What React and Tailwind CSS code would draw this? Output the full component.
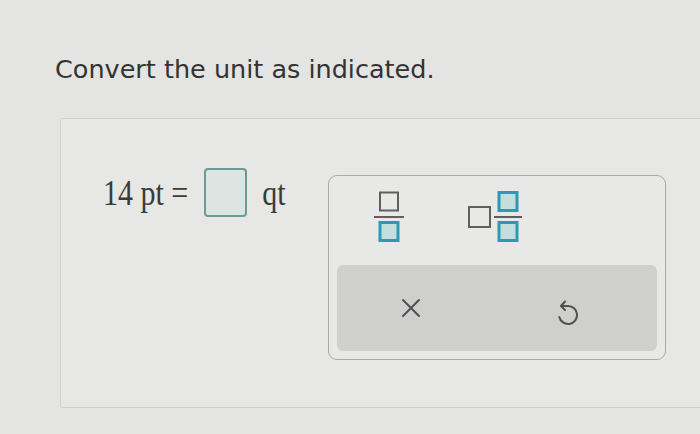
import React from "react";

function FracIcon() {
  return (
    <svg width="32" height="52" viewBox="0 0 32 52">
      <rect x="7" y="1.5" width="18" height="18" fill="none" stroke="#5f5f5f" strokeWidth="2" />
      <line x1="1" y1="26" x2="31" y2="26" stroke="#5f5f5f" strokeWidth="2" />
      <rect x="7" y="31.5" width="18" height="18" fill="#c4dedd" stroke="#2b9bb3" strokeWidth="3" />
    </svg>
  );
}

function MixedIcon() {
  return (
    <svg width="58" height="52" viewBox="0 0 58 52">
      <rect x="2" y="16" width="21" height="20" fill="none" stroke="#5f5f5f" strokeWidth="2" />
      <rect x="32" y="1.5" width="18" height="18" fill="#c4dedd" stroke="#2b9bb3" strokeWidth="3" />
      <line x1="27" y1="26" x2="55" y2="26" stroke="#5f5f5f" strokeWidth="2" />
      <rect x="32" y="31.5" width="18" height="18" fill="#c4dedd" stroke="#2b9bb3" strokeWidth="3" />
    </svg>
  );
}

function XIcon() {
  return (
    <svg width="22" height="22" viewBox="0 0 22 22">
      <path d="M3 3 L19 19 M19 3 L3 19" stroke="#505050" strokeWidth="2" fill="none" strokeLinecap="round" />
    </svg>
  );
}

function UndoIcon() {
  return (
    <svg width="26" height="28" viewBox="0 0 26 28">
      <path d="M6 7 H13 A9 9 0 1 1 4.3 18" stroke="#505050" strokeWidth="2" fill="none" strokeLinecap="round" strokeLinejoin="round" />
      <path d="M10 2.5 L6 7 L10 11" stroke="#505050" strokeWidth="2" fill="none" strokeLinecap="round" strokeLinejoin="round" />
    </svg>
  );
}

export default function App() {
  return (
    <div className="w-[700px] h-[434px] overflow-hidden bg-[#e4e4e2] flex flex-col">
      <div
        className="pl-[55px] pt-[52px] text-[25.5px] leading-[34px] text-[#333333]"
        style={{ fontFamily: "'DejaVu Sans', Verdana, sans-serif" }}
      >
        Convert the unit as indicated.
      </div>
      <div className="ml-[60px] mt-[32px] w-[680px] h-[290px] shrink-0 rounded-[3px] border border-[#cfcfcd] bg-[#e7e7e5] flex items-start pl-[42px] pt-[49px]">
        <div
          className="flex items-center text-[#3a3a3a] text-[30px] leading-[36px]"
          style={{ fontFamily: "'Liberation Serif', 'Times New Roman', serif" }}
        >
          <span className="scale-y-[1.2] origin-center">14 pt =</span>
          <span className="ml-[16px] w-[43px] h-[49px] rounded-[4px] border-2 border-[#6b9a98] bg-[#dce5e2]" />
          <span className="ml-[15px] scale-y-[1.2]">qt</span>
        </div>
        <div className="ml-[42px] mt-[7px] w-[338px] h-[185px] rounded-[9px] border border-[#a9a9a7] bg-[#e8e8e6] flex flex-col">
          <div className="h-[89px] flex items-start pl-[44px] gap-[62px] pt-[15px]">
            <FracIcon />
            <MixedIcon />
          </div>
          <div className="mx-[8px] mb-[8px] flex-1 rounded-[6px] bg-[#cfd0cd] flex items-center">
            <div className="ml-[63px]">
              <XIcon />
            </div>
            <div className="ml-[133px] pt-[10px]">
              <UndoIcon />
            </div>
          </div>
        </div>
      </div>
    </div>
  );
}
